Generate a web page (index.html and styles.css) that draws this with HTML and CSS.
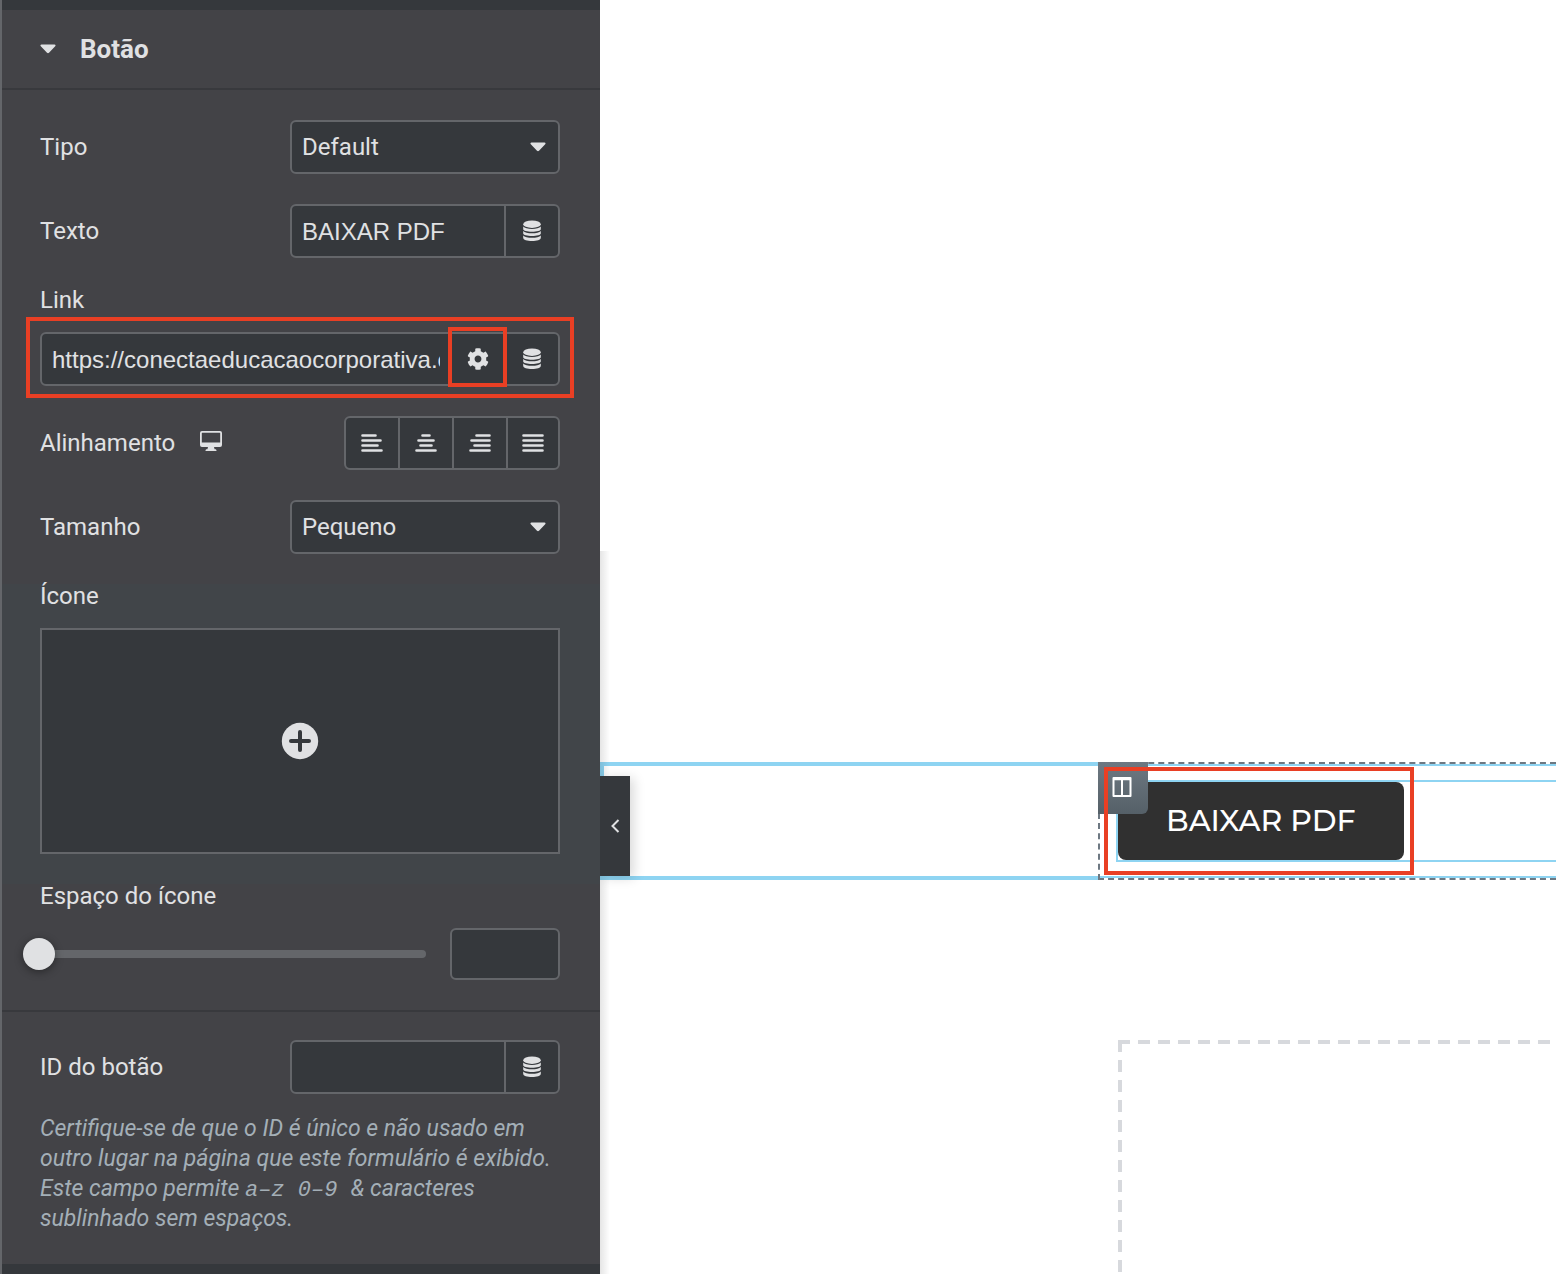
FILE: index.html
```html
<!DOCTYPE html>
<html lang="pt-BR">
<head>
<meta charset="utf-8">
<meta name="viewport" content="width=device-width, initial-scale=1">
<title>Editar Botão</title>
<link rel="stylesheet" href="styles.css">
</head>
<body>
<svg class="sprite" aria-hidden="true">
  <symbol id="database" viewBox="0 0 18 22">
    <ellipse cx="9" cy="4.2" rx="8.8" ry="3.7"/>
    <path d="M.2 6.6C1.5 8 5 8.9 9 8.9s7.500-.9 8.800-2.300v2.600c0 1.400-3.900 2.500-8.800 2.500S.2 10.600.2 9.200z"/>
    <path d="M.2 11C1.500 12.400 5 13.300 9 13.300s7.500-.9 8.800-2.300v2.600c0 1.400-3.900 2.500-8.800 2.500S.2 15 .2 13.600z"/>
    <path d="M.2 15.400C1.500 16.800 5 17.700 9 17.700s7.500-.9 8.800-2.300V18c0 1.700-3.900 3-8.800 3S.2 19.700.2 18z"/>
  </symbol>
  <symbol id="caret" viewBox="0 0 16 10">
    <path d="M1.500.5h13c1 0 1.400 1 .7 1.700L9 8.700c-.6.6-1.400.6-2 0L.8 2.200C.1 1.500.5.5 1.500.5z"/>
  </symbol>
</svg>
<div class="editor">
  <aside class="panel">
    <button class="section-title" type="button" aria-expanded="true">
      <svg class="caret"><use href="#caret"/></svg>
      <span>Botão</span>
    </button>
    <form class="controls">
      <div class="control inline">
        <label for="type">Tipo</label>
        <div class="select">
          <select id="type"><option>Default</option></select>
          <svg class="caret"><use href="#caret"/></svg>
        </div>
      </div>
      <div class="control inline">
        <label for="text">Texto</label>
        <div class="field half">
          <input id="text" type="text" value="BAIXAR PDF">
          <button type="button" aria-label="Tags dinâmicas"><svg class="database"><use href="#database"/></svg></button>
        </div>
      </div>
      <div class="control">
        <label for="link">Link</label>
        <div class="marked">
          <div class="field">
            <input id="link" type="text" value="https://conectaeducacaocorporativa.com">
            <button class="options" type="button" aria-label="Opções do link">
              <svg class="gear" viewBox="0 0 512 512"><path d="M487.4 315.7l-42.6-24.6c4.3-23.2 4.3-47 0-70.2l42.6-24.6c4.9-2.8 7.1-8.6 5.5-14-11.1-35.6-30-67.8-54.7-94.6-3.8-4.1-10-5.1-14.8-2.3L380.8 110c-17.900-15.400-38.500-27.300-60.800-35.100V25.800c0-5.600-3.900-10.500-9.400-11.700-36.700-8.200-74.300-7.800-109.200 0-5.500 1.200-9.400 6.100-9.400 11.700V75c-22.200 7.900-42.800 19.800-60.800 35.100L88.700 85.500c-4.900-2.800-11-1.900-14.800 2.300-24.700 26.700-43.600 58.900-54.700 94.600-1.700 5.400.6 11.200 5.500 14L67.300 221c-4.300 23.200-4.300 47 0 70.200l-42.600 24.600c-4.900 2.800-7.100 8.600-5.500 14 11.100 35.600 30 67.800 54.700 94.600 3.800 4.100 10 5.100 14.800 2.300l42.600-24.600c17.900 15.400 38.500 27.300 60.800 35.100v49.200c0 5.600 3.900 10.500 9.400 11.700 36.700 8.200 74.300 7.800 109.200 0 5.500-1.200 9.400-6.100 9.400-11.700v-49.200c22.200-7.900 42.800-19.800 60.800-35.100l42.600 24.600c4.900 2.800 11 1.900 14.800-2.300 24.700-26.700 43.600-58.900 54.700-94.600 1.500-5.500-.7-11.300-5.600-14.100zM256 336c-44.100 0-80-35.900-80-80s35.900-80 80-80 80 35.900 80 80-35.900 80-80 80z"/></svg>
            </button>
            <button type="button" aria-label="Tags dinâmicas"><svg class="database"><use href="#database"/></svg></button>
          </div>
        </div>
      </div>
      <div class="control inline">
        <div class="label-group">
          <span id="align-label">Alinhamento</span>
          <button class="device" type="button" aria-label="Desktop">
            <svg viewBox="0 0 24 22"><path fill-rule="evenodd" d="M3 1h18a2 2 0 0 1 2 2v12a2 2 0 0 1-2 2h-6l.6 2.200h.6c1 0 1.300.6 1.300 1.800H6.500c0-1.200.3-1.800 1.300-1.800h.6L9 17H3a2 2 0 0 1-2-2V3a2 2 0 0 1 2-2zm.3 1.800a.5.5 0 0 0-.5.5v9.200h18.400V3.300a.5.5 0 0 0-.5-.5z"/></svg>
          </button>
        </div>
        <div class="field choices" role="group" aria-labelledby="align-label">
          <button type="button" aria-label="Esquerda"><svg class="align" viewBox="0 0 24 20"><path d="M2.500 2.500h13M2.500 7.500h18M2.500 12.500h15M2.500 17.500h19"/></svg></button>
          <button type="button" aria-label="Centro"><svg class="align" viewBox="0 0 24 20"><path d="M8.500 2.500h7M4.500 7.500h15M6.500 12.500h11M2.500 17.500h19"/></svg></button>
          <button type="button" aria-label="Direita"><svg class="align" viewBox="0 0 24 20"><path d="M8.500 2.500h13M3.500 7.500h18M6.500 12.500h15M2.500 17.500h19"/></svg></button>
          <button type="button" aria-label="Justificado"><svg class="align" viewBox="0 0 24 20"><path d="M2.500 2.500h19M2.500 7.500h19M2.500 12.500h19M2.500 17.500h19"/></svg></button>
        </div>
      </div>
      <div class="control inline">
        <label for="size">Tamanho</label>
        <div class="select">
          <select id="size"><option>Pequeno</option></select>
          <svg class="caret"><use href="#caret"/></svg>
        </div>
      </div>
      <div class="control icon-control">
        <label for="icon">Ícone</label>
        <button id="icon" class="media" type="button" aria-label="Escolher ícone">
          <svg viewBox="0 0 38 38"><circle cx="19" cy="19" r="18.200"/><path d="M19 10v18M10 19h18"/></svg>
        </button>
      </div>
      <div class="control">
        <label for="space">Espaço do ícone</label>
        <div class="slider">
          <input id="space" type="range" min="0" max="50" value="0">
          <input class="amount" type="text" inputmode="numeric" aria-label="Valor do espaço do ícone">
        </div>
      </div>
      <div class="control inline separated">
        <label for="button-id">ID do botão</label>
        <div class="field half">
          <input id="button-id" type="text">
          <button type="button" aria-label="Tags dinâmicas"><svg class="database"><use href="#database"/></svg></button>
        </div>
      </div>
      <p class="description">Certifique-se de que o ID é único e não usado em outro lugar na página que este formulário é exibido. Este campo permite <code>a–z 0–9 </code>&amp; caracteres sublinhado sem espaços.</p>
    </form>
  </aside>
  <main class="canvas">
    <button class="collapse" type="button" aria-label="Recolher painel">
      <svg viewBox="0 0 10 16"><path d="M8.500 2L2.500 8l6 6"/></svg>
    </button>
    <section class="row">
      <div class="column-empty"></div>
      <div class="column">
        <div class="widget"><a class="download" href="#">BAIXAR PDF</a></div>
        <button class="column-handle" type="button" aria-label="Editar coluna">
          <svg viewBox="0 0 22 22"><path d="M2.500 2h17v18h-17zM11 2v18M2 3.200h18"/></svg>
        </button>
        <div class="mark"></div>
      </div>
    </section>
    <section class="drop-area"></section>
  </main>
</div>
</body>
</html>
```
FILE: styles.css
```css
* { box-sizing: border-box; }

:root {
  --panel: #434347;
  --dark: #35383c;
  --line: #64666a;
  --ink: #e0e1e3;
  --mark: #e93f24;
  --blue: #8ed4f2;
}

body {
  margin: 0;
  background: #fff;
  font-family: Roboto, sans-serif;
  font-size: 24px;
  line-height: 24px;
  color: var(--ink);
}

button, input, select {
  margin: 0;
  padding: 0;
  border: 0;
  border-radius: 0;
  background: none;
  color: inherit;
  font: inherit;
}

svg { display: block; fill: currentColor; }
.sprite { position: absolute; width: 0; height: 0; }

.editor {
  display: grid;
  grid-template-columns: 600px minmax(0, 1fr);
  min-height: 100vh;
}

/* Panel */
.panel {
  border-left: 2px solid var(--line);
  background: var(--dark);
  padding: 10px 0;
}

.section-title {
  display: flex;
  align-items: center;
  gap: 24px;
  width: 100%;
  height: 80px;
  padding: 0 38px;
  border-bottom: 2px solid #38393d;
  background: var(--panel);
  font-size: 26px;
  font-weight: 700;
}

.caret { width: 16px; height: 10px; }

.controls { padding-top: 30px; background: var(--panel); }
.control { padding: 0 40px 30px 38px; }
.control > label { display: block; margin-bottom: 20px; }

.inline {
  display: flex;
  align-items: center;
  justify-content: space-between;
}
.inline > label { margin-bottom: 0; }

.select { position: relative; width: 270px; }
.select select {
  display: block;
  appearance: none;
  width: 100%;
  height: 54px;
  padding: 0 40px 0 10px;
  border: 2px solid var(--line);
  border-radius: 6px;
  background: var(--dark);
}
.select .caret {
  position: absolute;
  top: 22px;
  right: 14px;
  pointer-events: none;
}

.field {
  display: flex;
  height: 54px;
  border: 2px solid var(--line);
  border-radius: 6px;
  background: var(--dark);
}
.half { width: 270px; }
.field input {
  flex: 1;
  min-width: 0;
  margin: 0 10px;
  padding-top: 2px;
  font-family: "Liberation Sans", Arial, sans-serif;
}
.field button {
  display: grid;
  place-items: center;
  width: 54px;
  border-left: 2px solid var(--line);
}
.database { width: 18px; height: 22px; }
.gear { width: 22px; height: 22px; }

.marked, .options { position: relative; }
.marked::after, .options::after {
  content: "";
  position: absolute;
  border: 4px solid var(--mark);
  pointer-events: none;
}
.marked::after { inset: -15px -14px -12px; }
.options::after { inset: -7px -3px -3px -4px; }

.label-group { display: flex; align-items: center; gap: 24px; }
.device svg { width: 24px; height: 22px; margin-bottom: 4px; }

.choices button:first-child { width: 52px; border-left: 0; }
.choices button:last-child { width: 52px; }
.align {
  width: 24px;
  height: 20px;
  stroke: currentColor;
  stroke-width: 2.600;
  stroke-linecap: round;
}

.icon-control { background: #414549; }
.media {
  display: grid;
  place-items: center;
  width: 100%;
  height: 226px;
  border: 2px solid var(--line);
  background: var(--dark);
}
.media svg { width: 38px; height: 38px; }
.media path { stroke: var(--dark); stroke-width: 4; stroke-linecap: round; }

.slider { display: flex; align-items: center; gap: 24px; }
.slider input[type="range"] {
  appearance: none;
  flex: 1;
  min-width: 0;
  height: 32px;
  margin-left: -17px;
}
.slider input::-webkit-slider-runnable-track {
  height: 8px;
  border-radius: 4px;
  background: linear-gradient(to right, transparent 16px, var(--line) 16px);
}
.slider input::-webkit-slider-thumb {
  appearance: none;
  width: 32px;
  height: 32px;
  margin-top: -12px;
  border-radius: 50%;
  background: var(--ink);
  box-shadow: 0 2px 8px rgba(0, 0, 0, .4);
}
.amount {
  width: 110px;
  height: 52px;
  padding: 0 10px;
  border: 2px solid var(--line);
  border-radius: 6px;
  background: var(--dark);
}

.separated {
  padding-top: 28px;
  padding-bottom: 20px;
  border-top: 2px solid #38393d;
}

.description {
  margin: 0;
  padding: 0 40px 30px 38px;
  font-size: 23px;
  font-style: italic;
  line-height: 30px;
  color: #a4afb7;
}
.description code {
  font-family: "Liberation Mono", "Courier New", monospace;
  font-size: 22px;
  line-height: 24px;
  white-space: pre-wrap;
}

/* Canvas */
.canvas {
  position: relative;
  display: flex;
  flex-direction: column;
  padding-top: 762px;
  overflow: hidden;
}
.canvas::before {
  content: "";
  position: absolute;
  top: 551px;
  bottom: 0;
  left: 0;
  width: 10px;
  background: linear-gradient(to right, rgba(0, 0, 0, .1), transparent);
}

.collapse {
  position: absolute;
  z-index: 1;
  top: 776px;
  left: 0;
  display: grid;
  place-items: center;
  width: 30px;
  height: 100px;
  background: var(--dark);
  box-shadow: 4px 2px 12px rgba(0, 0, 0, .15);
}
.collapse svg {
  width: 10px;
  height: 16px;
  fill: none;
  stroke: currentColor;
  stroke-width: 2;
}

.row {
  display: grid;
  grid-template-columns: 498px minmax(0, 1fr);
  height: 118px;
}
.column-empty { border: 4px solid var(--blue); border-right: 0; }
.column {
  position: relative;
  border: 2px dashed #6d7882;
  border-right: 0;
  padding: 16px 0 16px 16px;
  box-shadow: inset 0 2px var(--blue), inset 0 -2px var(--blue);
}
.widget {
  border: 2px solid var(--blue);
  border-right: 0;
}
.download {
  display: block;
  width: fit-content;
  padding: 24px 48px;
  border-radius: 8px;
  background: #303030;
  color: #fff;
  font-family: Montserrat, Inter, sans-serif;
  font-size: 30px;
  font-weight: 500;
  line-height: 30px;
  text-decoration: none;
}
.column-handle {
  position: absolute;
  top: -2px;
  left: -2px;
  width: 50px;
  height: 52px;
  padding: 0 0 2px 13px;
  border-bottom-right-radius: 6px;
  background: linear-gradient(#6d7882, #556068);
  color: #fff;
}
.column-handle svg {
  width: 22px;
  height: 22px;
  fill: none;
  stroke: currentColor;
  stroke-width: 2;
  stroke-linejoin: round;
}
.mark {
  position: absolute;
  top: 3px;
  left: 4px;
  width: 310px;
  height: 108px;
  border: 4px solid var(--mark);
  pointer-events: none;
}

.drop-area {
  flex: 1;
  margin: 160px 0 0 518px;
  background:
    repeating-linear-gradient(to right, #d7d9dd 0 12px, transparent 12px 20px) top / 100% 4px no-repeat,
    repeating-linear-gradient(to bottom, #d7d9dd 0 12px, transparent 12px 20px) left / 4px 100% no-repeat;
}
```
